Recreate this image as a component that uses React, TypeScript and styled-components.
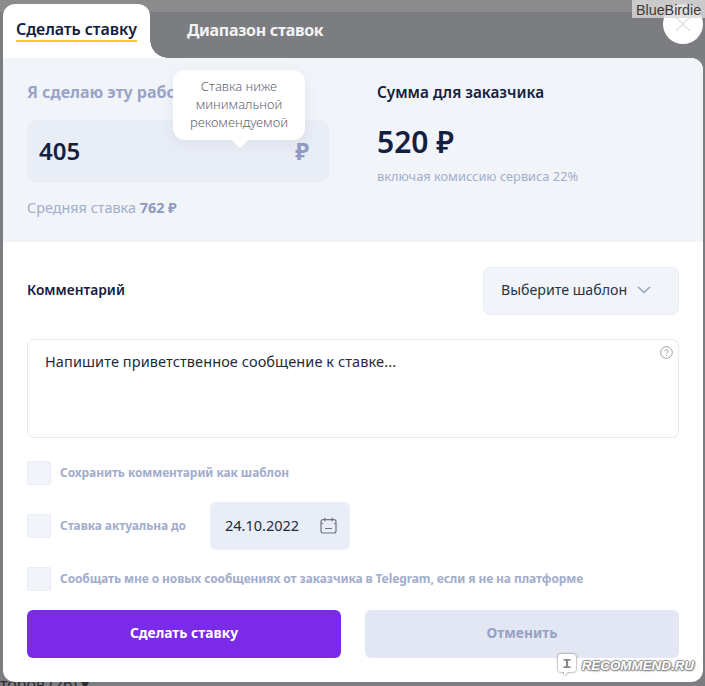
import styled, { createGlobalStyle } from 'styled-components';

const GlobalStyle = createGlobalStyle`
    html, body {
        margin: 0;
        padding: 0;
    }
    body {
        font-family: "Noto Sans", "Open Sans", sans-serif;
        background: #7c7d81;
    }
    * {
        box-sizing: border-box;
    }
`;

const Screen = styled.div`
    position: relative;
    width: 705px;
    height: 686px;
    overflow: hidden;
    padding: 4px 2px 0 3px;
    background: linear-gradient(#8b8b8c 0, #8b8b8c 12px, #7c7d81 12px);
`;

const BackdropText = styled.div`
    position: absolute;
    left: 0;
    bottom: -9px;
    font-size: 16px;
    color: #2a2a35;
`;

const Dialog = styled.div`
    position: relative;
    width: 700px;
    color: #13203f;
`;

const Tabs = styled.div`
    display: flex;
    align-items: stretch;
    height: 54px;
`;

const ActiveTab = styled.div`
    position: relative;
    width: 147px;
    padding: 14px 0 0 13px;
    background: #fff;
    border-radius: 12px 12px 0 0;

    &:after {
        content: '';
        position: absolute;
        right: -18px;
        bottom: 0;
        width: 18px;
        height: 18px;
        background: radial-gradient(circle at 100% 0, transparent 17.5px, #fff 18px);
    }
`;

const ActiveTabLabel = styled.span`
    display: inline-block;
    font-size: 16px;
    font-weight: 600;
    line-height: 22px;
    letter-spacing: -0.1px;
    color: #13203f;
    border-bottom: 2px solid #f6cd17;
`;

const Tab = styled.div`
    margin-left: 37px;
    padding-top: 15px;
    font-size: 16px;
    font-weight: 700;
    line-height: 22px;
    letter-spacing: -0.3px;
    color: #f2f3f6;
`;

const Panel = styled.div`
    height: 624px;
    background: #fff;
    border-radius: 0 12px 12px 12px;
    overflow: hidden;
`;

const BidSection = styled.section`
    display: flex;
    height: 184px;
    padding: 23px 24px 0;
    background: #f1f4f9;
`;

const BidColumn = styled.div`
    width: 302px;
    margin-right: 48px;
`;

const FieldLabel = styled.div`
    font-size: 16px;
    font-weight: 700;
    line-height: 22px;
    color: #9aa4c8;
    white-space: nowrap;
`;

const SumLabel = styled(FieldLabel)`
    font-size: 15.3px;
    font-weight: 600;
    color: #13203f;
`;

const AmountField = styled.div`
    display: flex;
    align-items: center;
    justify-content: space-between;
    height: 63px;
    margin-top: 17px;
    padding: 0 20px 2px 12px;
    background: #e9edf5;
    border-radius: 10px;
`;

const AmountValue = styled.span`
    font-size: 24px;
    font-weight: 600;
    color: #13203f;
`;

const AmountCurrency = styled.span`
    font-size: 23px;
    font-weight: 700;
    color: #919dc6;
`;

const Hint = styled.div`
    margin-top: 15px;
    font-size: 14.4px;
    line-height: 20px;
    color: #a3adcc;

    b {
        font-weight: 700;
        color: #8f99bd;
    }
`;

const SumValue = styled.div`
    margin-top: 19px;
    font-size: 30px;
    font-weight: 600;
    line-height: 40px;
    color: #13203f;
`;

const SumNote = styled.div`
    margin-top: 5px;
    font-size: 12.8px;
    line-height: 18px;
    color: #a3adcc;
`;

const Tooltip = styled.div`
    position: absolute;
    left: 170px;
    top: 66px;
    width: 132px;
    height: 70px;
    padding-top: 7px;
    background: #fff;
    border-radius: 12px;
    box-shadow: 0 4px 14px rgba(120, 135, 175, 0.12);
    font-size: 13px;
    font-weight: 300;
    line-height: 18px;
    text-align: center;
    color: #5e6675;

    &:after {
        content: '';
        position: absolute;
        left: 61px;
        bottom: -6px;
        width: 12px;
        height: 12px;
        background: #fff;
        transform: rotate(45deg);
    }
`;

const CloseButton = styled.button`
    position: absolute;
    top: 0;
    right: 0;
    display: flex;
    align-items: center;
    justify-content: center;
    width: 40px;
    height: 40px;
    padding: 0;
    border: none;
    border-radius: 50%;
    background: #fff;
`;

const CommentHeader = styled.div`
    display: flex;
    align-items: center;
    justify-content: space-between;
    padding: 25px 24px 0;
`;

const CommentTitle = styled.div`
    padding-bottom: 3px;
    font-size: 13.8px;
    font-weight: 600;
    color: #13203f;
`;

const TemplateSelect = styled.div`
    display: flex;
    align-items: center;
    gap: 10px;
    width: 196px;
    height: 48px;
    padding: 0 0 3px 17px;
    background: #f1f4f9;
    border: 1px solid #e8ecf4;
    border-radius: 7px;
    font-size: 14.2px;
    color: #2b3346;
`;

const CommentBox = styled.div`
    position: relative;
    height: 99px;
    margin: 24px 24px 0;
    padding: 11px 17px;
    border: 1px solid #e5e8ef;
    border-radius: 7px;
    font-size: 14.5px;
    line-height: 20px;
    letter-spacing: 0.1px;
    color: #222b3d;
`;

const HelpIcon = styled.span`
    position: absolute;
    top: 6px;
    right: 5px;
    display: flex;
    color: #9b9ea6;
`;

const OptionList = styled.div`
    padding: 20px 24px 0;
`;

const OptionRow = styled.label<{ $height: number }>`
    display: flex;
    align-items: center;
    gap: 9px;
    height: ${p => p.$height}px;
`;

const CheckBox = styled.span`
    flex: none;
    width: 24px;
    height: 24px;
    background: #f1f4f9;
    border: 1px solid #e9edf5;
    border-radius: 2px;
`;

const OptionText = styled.span`
    padding-bottom: 2px;
    font-size: 12px;
    font-weight: 700;
    white-space: nowrap;
    letter-spacing: -0.1px;
    color: #a3adcc;
`;

const DateField = styled.div`
    display: flex;
    align-items: center;
    justify-content: space-between;
    width: 140px;
    height: 48px;
    margin-left: 15px;
    padding: 0 13px 2px 15px;
    background: #e9edf5;
    border-radius: 6px;
    font-size: 14.5px;
    color: #222b3d;
`;

const CalendarIcon = styled.span`
    display: flex;
    color: #6f7480;
`;

const Actions = styled.div`
    display: flex;
    gap: 24px;
    padding: 16px 24px 0;
`;

const ActionButton = styled.button<{ $primary?: boolean }>`
    width: 314px;
    height: 48px;
    padding: 0 0 3px;
    border: none;
    border-radius: 6px;
    font-family: inherit;
    font-size: 13.8px;
    font-weight: 700;
    background: ${p => (p.$primary ? '#7b2ae8' : '#e2e7f3')};
    color: ${p => (p.$primary ? '#fff' : '#97a1c5')};
`;

const UserBadge = styled.div`
    position: absolute;
    top: 0;
    right: 0;
    width: 73px;
    padding-left: 4px;
    height: 18px;
    background: rgba(218, 218, 218, 0.8);
    font-family: "Liberation Sans", sans-serif;
    font-size: 14.3px;
    line-height: 20px;
    color: #3b3b3b;
`;

const Watermark = styled.div`
    position: absolute;
    right: 11px;
    bottom: 9px;
    display: flex;
    align-items: center;
    gap: 5px;
    font-family: "Liberation Sans", sans-serif;
    font-size: 13.4px;
    font-weight: 700;
    font-style: italic;
    color: #fff;
    text-shadow: 1px 0 1px #8c8c8c, -1px 0 1px #8c8c8c, 0 1px 1px #8c8c8c, 0 -1px 1px #8c8c8c, 1px 1px 2px #8c8c8c;
`;

const WatermarkIcon = styled.span`
    display: flex;
    filter: drop-shadow(0 0 1px rgba(70, 70, 70, 0.8));
`;

export default function App() {
    return (
        <>
            <GlobalStyle />
            <Screen>
                <BackdropText>торов (26) ▾</BackdropText>
                <Dialog>
                    <Tabs>
                        <ActiveTab>
                            <ActiveTabLabel>Сделать ставку</ActiveTabLabel>
                        </ActiveTab>
                        <Tab>Диапазон ставок</Tab>
                    </Tabs>
                    <Panel>
                        <BidSection>
                            <BidColumn>
                                <FieldLabel>Я сделаю эту работу за</FieldLabel>
                                <AmountField>
                                    <AmountValue>405</AmountValue>
                                    <AmountCurrency>₽</AmountCurrency>
                                </AmountField>
                                <Hint>Средняя ставка <b>762 ₽</b></Hint>
                            </BidColumn>
                            <div>
                                <SumLabel>Сумма для заказчика</SumLabel>
                                <SumValue>520 ₽</SumValue>
                                <SumNote>включая комиссию сервиса 22%</SumNote>
                            </div>
                        </BidSection>
                        <CommentHeader>
                            <CommentTitle>Комментарий</CommentTitle>
                            <TemplateSelect>
                                Выберите шаблон
                                <svg width="14" height="8" viewBox="0 0 14 8" fill="none" stroke="#9aa3bb" strokeWidth="1.6">
                                    <path d="M1 1l6 5.5L13 1" />
                                </svg>
                            </TemplateSelect>
                        </CommentHeader>
                        <CommentBox>
                            Напишите приветственное сообщение к ставке...
                            <HelpIcon>
                                <svg width="13" height="13" viewBox="0 0 13 13" fill="none" stroke="currentColor" strokeWidth="1">
                                    <circle cx="6.5" cy="6.5" r="5.8" />
                                    <path d="M4.9 5.2c0-2.1 3.2-2.1 3.2-.1 0 1.2-1.6 1.3-1.6 2.6M6.5 9v.9" />
                                </svg>
                            </HelpIcon>
                        </CommentBox>
                        <OptionList>
                            <OptionRow $height={30}>
                                <CheckBox />
                                <OptionText>Сохранить комментарий как шаблон</OptionText>
                            </OptionRow>
                            <OptionRow $height={76}>
                                <CheckBox />
                                <OptionText>Ставка актуальна до</OptionText>
                                <DateField>
                                    24.10.2022
                                    <CalendarIcon>
                                        <svg width="17" height="17" viewBox="0 0 17 17" fill="none" stroke="currentColor" strokeWidth="1.2">
                                            <rect x="1" y="2.6" width="15" height="13.4" rx="2" />
                                            <path d="M4.8.8v3.4M12.2.8v3.4M1 6.5h2.2M14 6.5h2M5 11.5h7" />
                                        </svg>
                                    </CalendarIcon>
                                </DateField>
                            </OptionRow>
                            <OptionRow $height={30}>
                                <CheckBox />
                                <OptionText>Сообщать мне о новых сообщениях от заказчика в Telegram, если я не на платформе</OptionText>
                            </OptionRow>
                        </OptionList>
                        <Actions>
                            <ActionButton $primary>Сделать ставку</ActionButton>
                            <ActionButton>Отменить</ActionButton>
                        </Actions>
                    </Panel>
                    <Tooltip>Ставка ниже<br />минимальной<br />рекомендуемой</Tooltip>
                    <CloseButton aria-label="Закрыть">
                        <svg width="16" height="16" viewBox="0 0 16 16" stroke="#dfe1e6" strokeWidth="1.4">
                            <path d="M1 1l14 14M15 1L1 15" />
                        </svg>
                    </CloseButton>
                </Dialog>
                <UserBadge>BlueBirdie</UserBadge>
                <Watermark>
                    <WatermarkIcon>
                        <svg width="20" height="24" viewBox="0 0 20 24">
                            <path d="M4 1h12a3 3 0 0 1 3 3v12a3 3 0 0 1-3 3h-5l-4 4v-4H4a3 3 0 0 1-3-3V4a3 3 0 0 1 3-3z" fill="#fff" />
                            <path d="M6.5 6h7v1.8h-2.4v5.4h2.4V15h-7v-1.8h2.4V7.8H6.5z" fill="#8a8a8a" />
                        </svg>
                    </WatermarkIcon>
                    RECOMMEND.RU
                </Watermark>
            </Screen>
        </>
    );
}
